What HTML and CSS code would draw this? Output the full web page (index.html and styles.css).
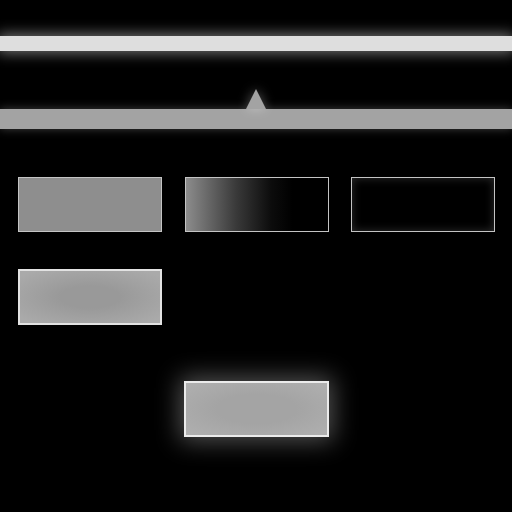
FILE: index.html
```html
<!DOCTYPE html>
<html lang="en">

<head>
    <meta charset="UTF-8">
    <meta name="viewport" content="width=device-width, initial-scale=1.0">
    <title>Swatches</title>
    <link rel="stylesheet" href="styles.css">
</head>

<body>
    <!-- Glowing progress line -->
    <div class="glow-line"></div>

    <!-- Slider track with thumb -->
    <div class="slider">
        <span class="thumb"></span>
    </div>

    <!-- Swatch row -->
    <div class="swatch-row">
        <div class="swatch flat"></div>
        <div class="swatch fade"></div>
        <div class="swatch hollow"></div>
    </div>

    <div class="swatch-row">
        <div class="swatch soft"></div>
    </div>

    <div class="swatch-row centered">
        <div class="swatch lit"></div>
    </div>
</body>

</html>
```

FILE: styles.css
```css
/* Basic Reset */
* {
    margin: 0;
    padding: 0;
    box-sizing: border-box;
}

body {
    background-color: #000;
    width: 512px;
    height: 512px;
    overflow: hidden;
}

/* Top glowing line */
.glow-line {
    margin-top: 36px;
    height: 15px;
    background-color: #dedede;
    box-shadow: 0 0 14px 2px rgba(255, 255, 255, 0.45);
}

/* Slider */
.slider {
    position: relative;
    margin-top: 58px;
    height: 20px;
    background-color: #a3a3a3;
    box-shadow: 0 0 10px rgba(255, 255, 255, 0.25);
}

.thumb {
    position: absolute;
    bottom: 100%;
    left: 246px;
    width: 0;
    height: 0;
    border-left: 10px solid transparent;
    border-right: 10px solid transparent;
    border-bottom: 20px solid #a3a3a3;
    filter: drop-shadow(0 0 6px rgba(255, 255, 255, 0.35));
}

/* Swatches */
.swatch-row {
    display: flex;
    gap: 22.5px;
    padding-left: 18px;
    margin-top: 48px;
}

.swatch-row + .swatch-row {
    margin-top: 37px;
}

.swatch-row.centered {
    padding-left: 184px;
    margin-top: 56px;
}

.swatch {
    width: 144px;
    height: 55px;
    border: 1px solid #c4c4c4;
}

.swatch.flat {
    background-color: #8e8e8e;
}

.swatch.fade {
    background: linear-gradient(to right, #8c8c8c 0%, #3a3a3a 35%, #0c0c0c 60%, #000 75%);
}

.swatch.hollow {
    background-color: #000;
    box-shadow: inset 0 0 10px rgba(255, 255, 255, 0.18);
}

.swatch.soft {
    height: 56px;
    border: 2px solid #e2e2e2;
    background-color: #a8a8a8;
    background-image: radial-gradient(ellipse at center, #999 30%, #aaa 90%);
}

.swatch.lit {
    width: 145px;
    height: 56px;
    border: 2px solid #ebebeb;
    background-color: #a9a9a9;
    background-image: radial-gradient(ellipse at center, #a4a4a4 40%, #b0b0b0 100%);
    box-shadow: 0 0 24px 4px rgba(255, 255, 255, 0.32);
}
```
